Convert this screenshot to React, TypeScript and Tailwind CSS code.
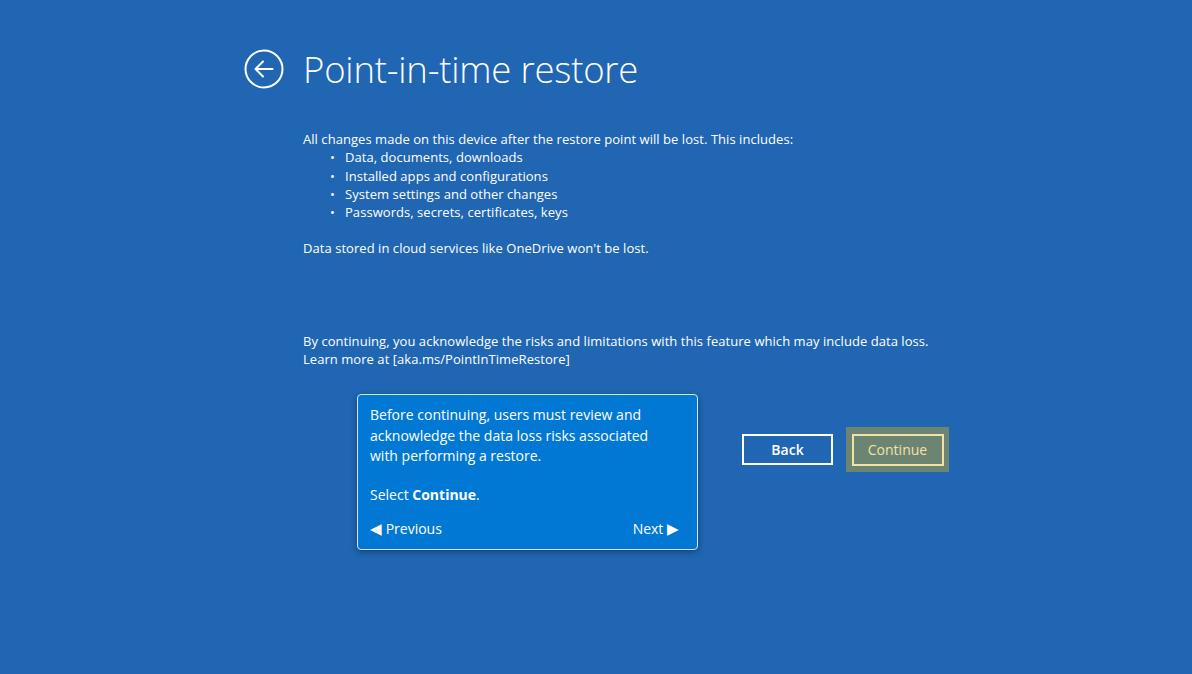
import React from "react";

export default function App() {
  const font = { fontFamily: '"Open Sans", "Noto Sans", sans-serif' };
  return (
    <div className="w-[1192px] h-[674px] bg-[#2066b2] text-white overflow-hidden" style={font}>
      <div className="flex items-center pl-[244px] pt-[44px]">
        <svg width="40" height="40" viewBox="0 0 40 40" className="shrink-0">
          <circle cx="20" cy="20" r="18.5" fill="none" stroke="white" strokeWidth="2" />
          <path d="M11.5 20 H28.5 M19 12.5 L11.5 20 L19 27.5" fill="none" stroke="white" strokeWidth="2" strokeLinecap="round" strokeLinejoin="round" />
        </svg>
        <h1 className="ml-[19px] text-[36.5px] font-light leading-[50px] tracking-[-0.2px]">Point-in-time restore</h1>
      </div>

      <div className="pl-[303px] pt-[36px] text-[13px] leading-[18.3px] tracking-[0.05px]">
        <p>All changes made on this device after the restore point will be lost. This includes:</p>
        <ul className="pl-[27px]">
          {[
            "Data, documents, downloads",
            "Installed apps and configurations",
            "System settings and other changes",
            "Passwords, secrets, certificates, keys",
          ].map((t) => (
            <li key={t} className="flex">
              <span className="w-[15px]">•</span>
              <span>{t}</span>
            </li>
          ))}
        </ul>
        <p className="mt-[18px]">Data stored in cloud services like OneDrive won't be lost.</p>

        <p className="mt-[74px]">By continuing, you acknowledge the risks and limitations with this feature which may include data loss.</p>
        <p>Learn more at [aka.ms/PointInTimeRestore]</p>
      </div>

      <div className="flex items-start pl-[357px] pt-[26px]">
        <div className="w-[341px] h-[156px] rounded-[4px] border border-[#d6e6f5] bg-[#0178d4] shadow-[0_2px_6px_rgba(0,0,0,0.35)] px-[12px] pt-[10px] text-[14px] leading-[20.5px] flex flex-col">
          <p className="max-w-[292px]">Before continuing, users must review and acknowledge the data loss risks associated with performing a restore.</p>
          <p className="mt-[18px]">Select <span className="font-bold">Continue</span>.</p>
          <div className="flex justify-between mt-[13px] pr-[6px]">
            <span><span className="text-[15px]">◀</span> Previous</span>
            <span>Next <span className="text-[15px]">▶</span></span>
          </div>
        </div>

        <div className="flex items-center ml-[44px] mt-[33px]">
          <div className="w-[91px] h-[31px] border-2 border-white flex items-center justify-center text-[14px] font-semibold">Back</div>
          <div className="ml-[13px] w-[103px] h-[45px] bg-[#6b8572] flex items-center justify-center">
            <div className="w-[92px] h-[32px] border-2 border-[#f2e3a5] text-[#f2e3a5] flex items-center justify-center text-[14px]">Continue</div>
          </div>
        </div>
      </div>
    </div>
  );
}
